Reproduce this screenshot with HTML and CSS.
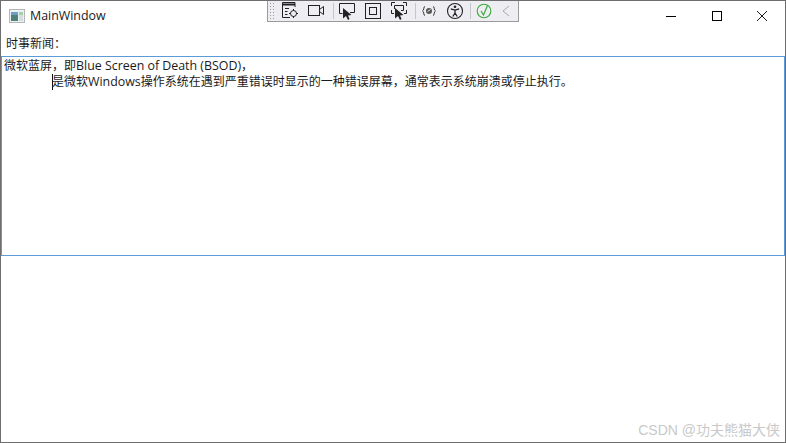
FILE: index.html
```html
<!DOCTYPE html>
<html lang="zh-CN">
<head>
    <meta charset="UTF-8">
    <meta name="viewport" content="width=device-width, initial-scale=1.0">
    <title>MainWindow</title>
    <link rel="stylesheet" href="styles.css">
</head>
<body>
    <div class="window">
        <div class="title-bar">
            <svg class="app-icon" width="16" height="14" viewBox="0 0 16 14">
                <rect x="0.5" y="0.5" width="15" height="13" fill="#eef1f2" stroke="#b4b7b9"/>
                <rect x="2" y="3" width="7" height="9" fill="#4f8079"/>
                <rect x="2" y="3" width="7" height="3" fill="#6d9fc4"/>
                <rect x="10" y="3" width="4" height="3" fill="#a9cfa9"/>
                <rect x="10" y="6" width="4" height="6" fill="#d3dce0"/>
            </svg>
            <span class="title-text">MainWindow</span>
            <div class="win-buttons">
                <svg width="10" height="10" viewBox="0 0 10 10"><path d="M0 5.5H10" stroke="#000" fill="none"/></svg>
                <svg width="10" height="10" viewBox="0 0 10 10"><rect x="0.5" y="0.5" width="9" height="9" stroke="#000" fill="none"/></svg>
                <svg width="10" height="10" viewBox="0 0 10 10"><path d="M0 0L10 10M10 0L0 10" stroke="#000" stroke-width="0.9" fill="none"/></svg>
            </div>
        </div>

        <div class="field-label">时事新闻：</div>
        <div class="news-box">
            <div class="news-line">微软蓝屏，即<span class="latin">Blue Screen of Death (BSOD)</span>，</div>
            <div class="news-line indented"><span class="caret"></span>是微软<span class="latin">Windows</span>操作系统在遇到严重错误时显示的一种错误屏幕，通常表示系统崩溃或停止执行。</div>
        </div>

        <div class="watermark">CSDN @功夫熊猫大侠</div>

        <!-- debug toolbar lies over the title bar -->
        <div class="debug-toolbar">
            <span class="grip"></span>
            <svg class="tool" width="20" height="20" viewBox="0 0 20 20" fill="none" stroke="#222">
                <path d="M10 16.5H2.5V1.5H15V6"/>
                <path d="M3 3.5H15" stroke-width="2"/>
                <path d="M5 7.5H9M5 10.5H7.5M5 13.5H7.5"/>
                <circle cx="13.5" cy="12.5" r="3"/>
                <path d="M13.5 8V10M13.5 15V17M9 12.5H11M16 12.5H18"/>
            </svg>
            <svg class="tool" width="20" height="20" viewBox="0 0 20 20" fill="none" stroke="#222">
                <rect x="2.5" y="4.5" width="11" height="10"/>
                <path d="M13.5 8.5L17.5 5.5V13.5L13.5 10.5"/>
            </svg>
            <span class="sep sep-a"></span>
            <svg class="tool" width="20" height="20" viewBox="0 0 20 20" fill="none" stroke="#222">
                <path d="M5.5 12.5H2.5V2.5H17.5V11.5H13"/>
                <path d="M6 7L6 17.5L9 15L11 19L12.5 18L11 14.5L14.5 14Z" fill="#222" stroke="none"/>
            </svg>
            <svg class="tool" width="20" height="20" viewBox="0 0 20 20" fill="none" stroke="#222">
                <rect x="2.5" y="2.5" width="15" height="15"/>
                <rect x="6.5" y="6.5" width="7" height="7"/>
            </svg>
            <svg class="tool" width="20" height="20" viewBox="0 0 20 20" fill="none" stroke="#222">
                <path d="M2.5 5V1.5H6M14 1.5H17.5V5M17.5 9V12.5H15M2.5 9V12.5H5"/>
                <path d="M5.5 4.5H14.5V9.5H12M5.5 4.5V8"/>
                <path d="M6 7L6 17.5L9 15L11 19L12.5 18L11 14.5L14.5 14Z" fill="#222" stroke="none"/>
            </svg>
            <span class="sep sep-b"></span>
            <svg class="tool" width="20" height="20" viewBox="0 0 20 20" fill="none" stroke="#333">
                <path d="M6 5.5C4 5.5 5.5 9.5 3.5 10C5.5 10.5 4 14.5 6 14.5M14 5.5C16 5.5 14.5 9.5 16.5 10C14.5 10.5 16 14.5 14 14.5"/>
                <circle cx="10" cy="10" r="3" fill="#555" stroke="none"/>
                <path d="M8.5 10.5L10 9.5L11.5 8.5" stroke="#eee"/>
            </svg>
            <svg class="tool" width="20" height="20" viewBox="0 0 20 20" fill="none" stroke="#222">
                <circle cx="10" cy="10" r="7.5" stroke-width="1.1"/>
                <circle cx="10" cy="5.8" r="1.3" fill="#222" stroke="none"/>
                <path d="M5.8 7.8L10 9L14.2 7.8M10 9V12M10 12L7.8 15.5M10 12L12.2 15.5" stroke-width="1.3"/>
            </svg>
            <span class="sep sep-c"></span>
            <svg class="tool" width="20" height="20" viewBox="0 0 20 20" fill="none">
                <circle cx="10" cy="10" r="6.8" stroke="#3aa83a" stroke-width="1.1"/>
                <path d="M7 10L9.5 14L13.5 4.5" stroke="#3aa83a" stroke-width="1.2"/>
            </svg>
            <svg class="tool tool-small" width="12" height="20" viewBox="0 0 12 20" fill="none">
                <path d="M9 5L3 10L9 15" stroke="#a8a8a8"/>
            </svg>
        </div>
    </div>
</body>
</html>
```

FILE: styles.css
```css
* {
    box-sizing: border-box;
}
html, body {
    margin: 0;
    height: 100%;
}
body {
    font-family: "Open Sans", "Noto Sans CJK SC", sans-serif;
    font-size: 12px;
    color: #1a1a1a;
    background: white;
}
.window {
    position: relative;
    height: 443px;
    border: 1px solid #6e6e6e;
    overflow: hidden;
}
.title-bar {
    display: flex;
    align-items: center;
    height: 29px;
    padding-left: 8px;
}
.app-icon {
    margin-right: 5px;
}
.title-text {
    font-family: "Open Sans", sans-serif;
    font-size: 12.4px;
}
.win-buttons {
    display: flex;
    gap: 35.5px;
    margin-left: auto;
    margin-right: 18px;
}
.field-label {
    height: 26px;
    padding: 5px 0 0 5px;
    line-height: 17px;
}
.news-box {
    height: 200px;
    border: 1px solid #5a9bd8;
    padding: 1px 2px;
}
.news-line {
    height: 16px;
    line-height: 16px;
    white-space: pre;
}
.latin {
    font-size: 12.4px;
}
.indented {
    padding-left: 48px;
}
.caret {
    position: absolute;
    width: 1px;
    height: 16px;
    background: #111;
}
.watermark {
    position: absolute;
    right: 5px;
    bottom: 3px;
    font-family: "Liberation Sans", "Noto Sans CJK SC", sans-serif;
    font-size: 14px;
    color: #c9c9c9;
}
.debug-toolbar {
    position: absolute;
    top: -1px;
    left: 266px;
    display: flex;
    align-items: center;
    width: 252px;
    height: 22px;
    padding-left: 1px;
    background: #eeeef2;
    border: 1px solid #9a9a9a;
    border-top: none;
}
.grip {
    width: 6px;
    height: 18px;
    margin-right: 2px;
    background-image: radial-gradient(#999 0.6px, transparent 0.7px);
    background-size: 3px 3px;
}
.tool {
    flex: none;
    margin: 0 3px;
}
.sep {
    width: 1px;
    height: 16px;
    background: #c6c6cc;
}
.sep-a {
    margin-left: 4px;
}
.sep-b {
    margin-left: 3px;
}
.sep-c {
    margin-left: 2px;
}
```
